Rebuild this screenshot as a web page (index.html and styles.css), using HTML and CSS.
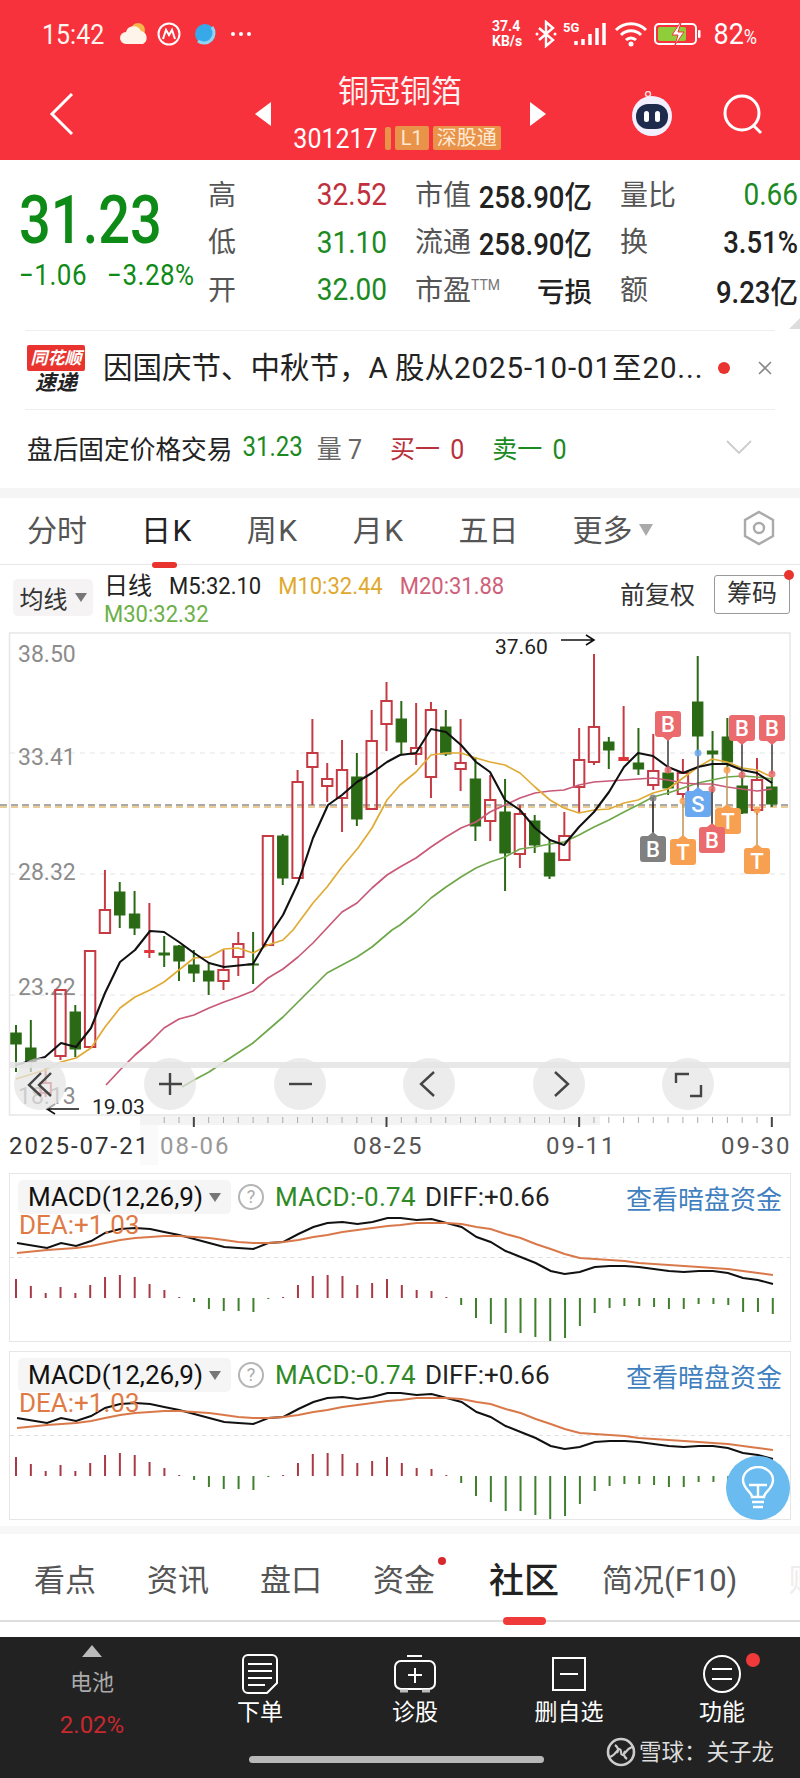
FILE: index.html
```html
<!DOCTYPE html>
<html lang="zh-CN">
<head>
  <meta charset="UTF-8" />
  <meta name="viewport" content="width=device-width, initial-scale=1" />
  <title>铜冠铜箔 301217</title>
  <link rel="stylesheet" href="styles.css">
</head>
<body>

  <!-- Barra roja -->
  <header class="top">
    <div class="status">
      <span class="clock num">15:42</span>
      <svg class="st-apps" width="140" height="30" viewBox="0 0 140 30">
        <circle cx="20" cy="11" r="7" fill="#f6b44a"/>
        <path d="M8 25a6 6 0 0 1 0-12 8 8 0 0 1 15-1 7 7 0 0 1 2 13z" fill="#fff4ea"/>
        <circle cx="51" cy="15" r="10.5" fill="none" stroke="#fff" stroke-width="2"/>
        <path d="M45 20l3-9 3 5 3-5 3 9" fill="none" stroke="#fff" stroke-width="2"/>
        <circle cx="87" cy="15" r="10" fill="#38a9e8"/>
        <path d="M80 22a10 10 0 0 0 14-14" fill="none" stroke="#8fd3f5" stroke-width="3"/>
        <circle cx="115" cy="15" r="2" fill="#fff"/>
        <circle cx="123" cy="15" r="2" fill="#fff"/>
        <circle cx="131" cy="15" r="2" fill="#fff"/>
      </svg>
      <div class="st-right">
        <span class="net">37.4<br>KB/s</span>
        <svg width="22" height="28" viewBox="0 0 22 28">
          <path d="M4 8l14 12-7 6V2l7 6L4 20" fill="none" stroke="#fff" stroke-width="2.4"/>
          <circle cx="2" cy="14" r="1.5" fill="#fff"/>
          <circle cx="20" cy="14" r="1.5" fill="#fff"/>
        </svg>
        <svg class="st-signal" width="44" height="28" viewBox="0 0 44 28">
          <text class="st-5g" x="0" y="12">5G</text>
          <path d="M13 21v4M20 19v6M27 14v11M34 8v17M41 3v22" stroke="#fff" stroke-width="3.5" fill="none"/>
        </svg>
        <svg width="34" height="28" viewBox="0 0 34 28">
          <path d="M2 10a21 21 0 0 1 30 0M7 15a14 14 0 0 1 20 0M12 20a7 7 0 0 1 10 0" fill="none" stroke="#fff" stroke-width="3"/>
          <circle cx="17" cy="24" r="2.5" fill="#fff"/>
        </svg>
        <svg width="48" height="24" viewBox="0 0 48 24">
          <rect x="1" y="2" width="41" height="20" rx="4" fill="none" stroke="#fff" stroke-width="2"/>
          <rect x="4" y="5" width="28" height="14" rx="2" fill="#8fce3a"/>
          <path d="M26 1l-8 12h6l-3 10 9-13h-6l3-9z" fill="#fff" stroke="#f8323c"/>
          <rect x="44" y="8" width="2.5" height="8" rx="1" fill="#fff"/>
        </svg>
        <span class="batt num">82<small>%</small></span>
      </div>
    </div>

    <nav class="navbar">
      <svg class="back" width="28" height="44" viewBox="0 0 28 44">
        <path d="M24 2L4 22l20 20" fill="none" stroke="#fff" stroke-width="3"/>
      </svg>
      <div class="stock">
        <span class="tri-left"></span>
        <div class="stock-name">
          <div class="stock-title">铜冠铜箔</div>
          <div class="stock-sub">
            <span class="code num">301217</span>
            <span class="tag-bar"></span>
            <span class="tag tag-l1">L1</span>
            <span class="tag">深股通</span>
          </div>
        </div>
        <span class="tri-right"></span>
      </div>
      <div class="nav-icons">
        <svg width="48" height="46" viewBox="0 0 48 46">
          <circle cx="20" cy="3" r="2.5" fill="none" stroke="#ffd6da" stroke-width="1.5"/>
          <circle cx="24" cy="25" r="20" fill="#f2f0ff"/>
          <rect x="8" y="13" width="32" height="25" rx="12" fill="#1f2b4d"/>
          <rect x="16" y="20" width="5" height="11" rx="2.5" fill="#fff"/>
          <rect x="27" y="20" width="5" height="11" rx="2.5" fill="#fff"/>
        </svg>
        <svg width="40" height="42" viewBox="0 0 40 42">
          <circle cx="19" cy="20" r="17" fill="none" stroke="#fff" stroke-width="3"/>
          <path d="M30 32l8 8" stroke="#fff" stroke-width="3"/>
        </svg>
      </div>
    </nav>
  </header>

  <!-- Cotización -->
  <section class="quote">
    <div class="price-box">
      <div class="price num">31.23</div>
      <div class="change"><span class="num">−1.06</span><span class="num">−3.28%</span></div>
    </div>
    <div class="stats">
      <span class="s-label">高</span><span class="s-val num red">32.52</span>
      <span class="s-label">市值</span><span class="s-val num dark">258.90亿</span>
      <span class="s-label">量比</span><span class="s-val num green">0.66</span>

      <span class="s-label">低</span><span class="s-val num green">31.10</span>
      <span class="s-label">流通</span><span class="s-val num dark">258.90亿</span>
      <span class="s-label">换</span><span class="s-val num dark">3.51%</span>

      <span class="s-label">开</span><span class="s-val num green">32.00</span>
      <span class="s-label">市盈<sup class="ttm">TTM</sup></span><span class="s-val dark">亏损</span>
      <span class="s-label">额</span><span class="s-val num dark">9.23亿</span>
    </div>
    <span class="corner"></span>
  </section>

  <section class="notice">
    <div class="flash">
      <div class="flash-top">同花顺</div>
      <div class="flash-bottom">速递</div>
    </div>
    <div class="notice-text">因国庆节、中秋节，A 股从<span class="notice-num">2025-10-01至20...</span></div>
    <span class="notice-dot"></span>
    <svg class="notice-close" width="16" height="16" viewBox="0 0 16 16">
      <path d="M2 2l12 12M14 2L2 14" stroke="#888" stroke-width="1.6"/>
    </svg>
  </section>

  <section class="after-hours">
    <span class="ah-title">盘后固定价格交易</span>
    <span class="num green ah-price">31.23</span>
    <span class="ah-gray">量 <span class="num">7</span></span>
    <span class="ah-red">买一 <span class="num">0</span></span>
    <span class="ah-green">卖一 <span class="num">0</span></span>
    <svg class="ah-more" width="26" height="14" viewBox="0 0 26 14">
      <path d="M1 1l12 12L25 1" fill="none" stroke="#ccc" stroke-width="1.8"/>
    </svg>
  </section>

  <div class="gap"></div>

  <nav class="period-tabs">
    <a>分时</a>
    <a class="k-tab active">日K</a>
    <a class="k-tab">周K</a>
    <a class="k-tab">月K</a>
    <a>五日</a>
    <a class="more">更多<span class="more-tri"></span></a>
    <svg class="hex" width="32" height="36" viewBox="0 0 32 36">
      <path d="M16 2l14 8v16l-14 8-14-8V10z" fill="none" stroke="#aaa" stroke-width="2.4"/>
      <circle cx="16" cy="18" r="5" fill="none" stroke="#aaa" stroke-width="2.4"/>
    </svg>
  </nav>

  <div class="ma-row">
    <div class="ma-chip">均线<span class="chip-tri"></span></div>
    <div class="ma-values">
      <div class="ma-line">
        <span class="ma-day">日线</span>
        <span class="num">M5:32.10</span>
        <span class="num c-m10">M10:32.44</span>
        <span class="num c-m20">M20:31.88</span>
      </div>
      <div class="ma-line"><span class="num c-m30">M30:32.32</span></div>
    </div>
    <span class="adjust">前复权</span>
    <div class="chips-btn">筹码<span class="chips-dot"></span></div>
  </div>

  <svg id="kline" class="kline" width="800" height="533" viewBox="0 632 800 533"></svg>

  <div class="macd-list">
    <section class="macd">
      <svg class="macd-plot" viewBox="10 1174 779 167" preserveAspectRatio="none"></svg>
      <div class="macd-head">
        <div class="macd-chip">MACD(12,26,9)<span class="chip-tri"></span></div>
        <span class="help">?</span>
        <span class="macd-green">MACD:-0.74</span>
        <span class="macd-diff">DIFF:+0.66</span>
        <a class="macd-link">查看暗盘资金</a>
      </div>
      <div class="macd-dea">DEA:+1.03</div>
    </section>
    <section class="macd">
      <svg class="macd-plot" viewBox="10 1174 779 167" preserveAspectRatio="none"></svg>
      <div class="macd-head">
        <div class="macd-chip">MACD(12,26,9)<span class="chip-tri"></span></div>
        <span class="help">?</span>
        <span class="macd-green">MACD:-0.74</span>
        <span class="macd-diff">DIFF:+0.66</span>
        <a class="macd-link">查看暗盘资金</a>
      </div>
      <div class="macd-dea">DEA:+1.03</div>
      <div class="fab">
        <svg width="34" height="44" viewBox="0 0 34 44">
          <path d="M11 31c0-5-9-8-9-17a15 13 0 0 1 30 0c0 9-9 12-9 17z" fill="none" stroke="#fff" stroke-width="2.4"/>
          <path d="M8 19h18M17 19v12M11 36h12M12 41h10" fill="none" stroke="#fff" stroke-width="2.4"/>
        </svg>
      </div>
    </section>
  </div>

  <div class="gap gap-low"></div>

  <nav class="info-tabs">
    <a>看点</a>
    <a>资讯</a>
    <a>盘口</a>
    <a class="has-dot">资金</a>
    <a class="active">社区</a>
    <a>简况(F10)</a>
    <a class="faded">财</a>
  </nav>

  <footer class="bar">
    <div class="bar-item bar-first">
      <span class="up-tri"></span>
      <span class="sector">电池</span>
      <span class="sector-pct">2.02%</span>
    </div>
    <div class="bar-item">
      <svg width="36" height="40" viewBox="0 0 36 40">
        <path d="M6 1h24a5 5 0 0 1 5 5v23l-10 10H6a5 5 0 0 1-5-5V6a5 5 0 0 1 5-5z" fill="none" stroke="#fff" stroke-width="2"/>
        <path d="M6 10h24M6 17h24M6 24h24M6 31h17" stroke="#fff" stroke-width="2"/>
      </svg>
      <span>下单</span>
    </div>
    <div class="bar-item">
      <svg width="44" height="40" viewBox="0 0 44 40">
        <path d="M14 2h15" stroke="#fff" stroke-width="2"/>
        <rect x="2" y="7" width="40" height="28" rx="6" fill="none" stroke="#fff" stroke-width="2"/>
        <path d="M22 14v15M15 21h14" stroke="#fff" stroke-width="2"/>
        <path d="M7 37h8M29 37h8" stroke="#bbb" stroke-width="3"/>
      </svg>
      <span>诊股</span>
    </div>
    <div class="bar-item">
      <svg width="36" height="40" viewBox="0 0 36 40">
        <rect x="2" y="4" width="32" height="32" fill="none" stroke="#fff" stroke-width="2"/>
        <path d="M9 20h18" stroke="#fff" stroke-width="2"/>
      </svg>
      <span>删自选</span>
    </div>
    <div class="bar-item">
      <svg width="40" height="40" viewBox="0 0 40 40">
        <circle cx="20" cy="20" r="18" fill="none" stroke="#fff" stroke-width="2"/>
        <path d="M10 15h20M10 25h20" stroke="#fff" stroke-width="2"/>
      </svg>
      <span>功能</span>
      <span class="bar-dot"></span>
    </div>
    <div class="watermark">
      <svg width="30" height="30" viewBox="0 0 30 30">
        <circle cx="15" cy="15" r="13" fill="none" stroke="#ccc" stroke-width="2.6"/>
        <path d="M4 20c3-1 5-3 7-6 2-3 4-2 4 1s2 4 4 1c2-3 4-5 7-6M9 8c3 2 4 5 2 8M21 22c-3-2-4-5-2-8" fill="none" stroke="#ccc" stroke-width="2.2"/>
      </svg>
      <span>雪球：关子龙</span>
    </div>
    <div class="home-bar"></div>
  </footer>

  <script src="chart.js"></script>
</body>
</html>
```

FILE: styles.css
```css
html, body {
  margin: 0;
  padding: 0;
  background-color: #fff;
}
body {
  width: 800px;
  height: 1778px;
  overflow: hidden;
  font-family: Roboto, 'Noto Sans CJK SC', sans-serif;
  color: #333;
}
svg {
  display: block;
  flex: none;
}
.num {
  display: inline-block;
  transform: scaleY(1.12);
}
.red { color: #c0303c; }
.green { color: #1b8a1f; }
.dark { color: #222; }

/* barra roja */
.top {
  height: 160px;
  background-color: #f8323c;
  color: #fff;
}
.status {
  height: 68px;
  display: flex;
  align-items: center;
  padding-left: 42px;
}
.clock {
  font-size: 25px;
  width: 76px;
  color: #fff6f0;
}
.st-right {
  display: flex;
  align-items: center;
  gap: 6.5px;
  margin-left: 234px;
}
.net {
  font-size: 14px;
  line-height: 15px;
  font-weight: 700;
  width: 36px;
}
.st-5g {
  font-size: 13px;
  font-weight: 700;
  fill: #fff;
}
.batt {
  font-size: 27px;
  margin-left: 5px;
}
.batt small {
  font-size: 18px;
}
.navbar {
  height: 92px;
  display: grid;
  grid-template-columns: 1fr auto 1fr;
  align-items: center;
}
.back {
  margin-left: 48px;
}
.stock {
  display: flex;
  align-items: center;
  gap: 20px;
}
.tri-left, .tri-right {
  width: 0;
  height: 0;
  border-top: 12px solid transparent;
  border-bottom: 12px solid transparent;
}
.tri-left { border-right: 16px solid #fff; }
.tri-right { border-left: 16px solid #fff; }
.stock-name {
  display: flex;
  flex-direction: column;
  align-items: center;
  width: 219px;
  margin-top: -3px;
}
.stock-title {
  font-size: 31px;
  line-height: 40px;
  color: #fff2f2;
}
.stock-sub {
  display: flex;
  align-items: center;
  height: 30px;
  margin-top: 11px;
  margin-left: -6px;
}
.code {
  font-size: 25px;
  margin-right: 7px;
}
.tag-bar {
  width: 6px;
  height: 23px;
  border-radius: 2px;
  background-color: #e8924a;
  margin-right: 4px;
}
.tag {
  height: 24px;
  line-height: 24px;
  padding: 0 4px;
  border-radius: 2px;
  background-color: #e8924a;
  color: #ffe9d2;
  font-size: 20px;
  white-space: nowrap;
}
.tag-l1 {
  margin-right: 4px;
  padding: 0 6px;
}
.nav-icons {
  display: flex;
  align-items: center;
  justify-content: flex-end;
  gap: 47px;
  padding-right: 37px;
}

/* cotización */
.quote {
  position: relative;
  height: 159px;
  padding: 11px 0 0 19px;
  display: flex;
}
.price-box {
  width: 189px;
  color: #0e8a16;
}
.price {
  font-size: 56px;
  line-height: 60px;
  font-weight: 500;
  margin-top: 19px;
  transform: scaleY(1.2);
  transform-origin: left center;
}
.change {
  display: flex;
  gap: 20px;
  margin-top: 10px;
  font-size: 26px;
  letter-spacing: 0.5px;
  line-height: 30px;
  white-space: nowrap;
}
.stats {
  display: grid;
  grid-template-columns: 60px 119px 88px 117px 90px 116px;
  grid-auto-rows: 47.5px;
  align-items: center;
}
.stats .s-label:nth-child(6n+3), .stats .s-label:nth-child(6n+5) {
  margin-left: 28px;
}
.s-label {
  font-size: 28px;
  line-height: 38px;
  margin-top: 2px;
  color: #555;
  white-space: nowrap;
}
.s-val {
  justify-self: end;
  font-size: 28px;
  white-space: nowrap;
}
.s-val.dark {
  font-size: 27.5px;
  font-weight: 500;
}
.ttm {
  font-size: 14px;
  color: #777;
  vertical-align: 10px;
  line-height: 0;
}
.corner {
  position: absolute;
  right: 0;
  bottom: 1px;
  width: 0;
  height: 0;
  border-left: 11px solid transparent;
  border-bottom: 11px solid #ddd;
}
.notice {
  margin: 0 25px;
  height: 78px;
  border-top: 1px solid #eee;
  border-bottom: 1px solid #eee;
  display: flex;
  align-items: center;
}
.flash {
  width: 58px;
  margin-left: 2px;
  margin-right: 18px;
  text-align: center;
  font-weight: 700;
  font-style: italic;
}
.flash-top {
  background-color: #e8332e;
  color: #fff;
  font-size: 17px;
  line-height: 26px;
  border-radius: 2px;
  white-space: nowrap;
}
.flash-bottom {
  color: #222;
  font-size: 21px;
  line-height: 24px;
}
.notice-text {
  font-size: 29.5px;
  line-height: 40px;
  margin-top: -5px;
  color: #222;
  white-space: nowrap;
  width: 612px;
}
.notice-num {
  letter-spacing: 0.9px;
}
.notice-dot {
  width: 12px;
  height: 12px;
  border-radius: 50%;
  background-color: #e8332e;
  flex: none;
  margin: -4px 0 0 3px;
}
.notice-close {
  margin: -4px 0 0 27px;
}
.after-hours {
  height: 78px;
  box-sizing: border-box;
  padding: 0 27px 4px;
  display: flex;
  align-items: center;
  font-size: 25px;
  white-space: nowrap;
}
.ah-title { color: #222; font-size: 25.7px; }
.ah-price { margin-left: 10px; font-size: 24px; }
.ah-gray { margin-left: 14px; color: #666; }
.ah-red { margin-left: 28px; color: #b8323c; word-spacing: 4px; }
.ah-green { margin-left: 28px; color: #1b8a1f; word-spacing: 4px; }
.ah-more { margin-left: auto; margin-right: 21px; }
.gap {
  height: 10px;
  background-color: #f5f5f5;
}
.gap-low {
  height: 8px;
  margin-top: 6px;
  background-color: #f7f7f7;
}

/* pestañas */
.period-tabs {
  height: 67px;
  box-sizing: border-box;
  border-bottom: 1px solid #e8e8e8;
  display: flex;
  align-items: center;
  gap: 54px;
  padding: 0 25px 6px 27px;
  font-size: 30px;
  color: #555;
  white-space: nowrap;
}
.period-tabs a {
  position: relative;
}
.period-tabs .k-tab {
  letter-spacing: 1.5px;
}
.period-tabs .active {
  color: #222;
}
.period-tabs .active::after {
  content: "";
  position: absolute;
  left: 11px;
  bottom: -18px;
  width: 25px;
  height: 6px;
  border-radius: 3px;
  background-color: #e8332e;
}
.more-tri {
  display: inline-block;
  margin-left: 7px;
  border-left: 7px solid transparent;
  border-right: 7px solid transparent;
  border-top: 12px solid #aaa;
  vertical-align: 5px;
}
.hex {
  margin-left: auto;
}
.ma-row {
  height: 67px;
  display: flex;
  padding-left: 13px;
  font-size: 22px;
  white-space: nowrap;
}
.ma-chip {
  width: 80px;
  height: 37px;
  margin-top: 14px;
  border-radius: 5px;
  background-color: #f5f3f3;
  display: flex;
  align-items: center;
  justify-content: center;
  gap: 7px;
  font-size: 24px;
  color: #333;
}
.chip-tri {
  width: 0;
  height: 0;
  border-left: 6px solid transparent;
  border-right: 6px solid transparent;
  border-top: 9px solid #777;
}
.ma-values {
  margin: 7px 0 0 11px;
  width: 516px;
}
.ma-line {
  display: flex;
  gap: 17px;
  line-height: 28px;
  color: #222;
}
.ma-day { font-size: 24px; }
.c-m10 { color: #e0a92e; }
.c-m20 { color: #d0607a; }
.c-m30 { color: #6db04a; }
.adjust {
  margin-top: 19px;
  font-size: 25px;
  line-height: 24px;
  height: 30px;
  color: #333;
}
.chips-btn {
  position: relative;
  width: 76px;
  height: 39px;
  box-sizing: border-box;
  margin: 10px 0 0 19px;
  border: 1px solid #999;
  border-radius: 3px;
  text-align: center;
  font-size: 25px;
  line-height: 36px;
}
.chips-dot {
  position: absolute;
  right: -5px;
  top: -6px;
  width: 10px;
  height: 10px;
  border-radius: 50%;
  background-color: #e8332e;
}

/* gráfico */
.kline {
  background-color: #fff;
}
.frame { fill: none; stroke: #e6e6e6; stroke-width: 1.5; }
.grid-line { stroke: #e4e4e4; stroke-width: 1; stroke-dasharray: 5 5; }
.last-dark { stroke: #555; stroke-width: 1; stroke-dasharray: 7 4; }
.last-gold { stroke: #d9992f; stroke-width: 1; stroke-dasharray: 7 4; }
.wick-up { stroke: #c63a44; stroke-width: 2; }
.wick-down { stroke: #2a6a14; stroke-width: 2; }
.body-up { fill: none; stroke: #c63a44; stroke-width: 2; }
.body-flat { fill: #e0353a; }
.body-down { fill: #2a6a14; stroke: #2a6a14; stroke-width: 1; }
.ma { fill: none; stroke-width: 1.7; stroke-linejoin: round; }
.ma5 { stroke: #111; stroke-width: 2.1; }
.ma10 { stroke: #e0ab35; }
.ma20 { stroke: #c85a78; }
.ma30 { stroke: #6fa84a; }
.y-label {
  font-size: 23px;
  fill: #8c8c8c;
}
.note {
  font-size: 21px;
  fill: #222;
}
.note-arrow { fill: none; stroke: #111; stroke-width: 1.6; }
.badge-letter {
  font-size: 22px;
  font-weight: 500;
  fill: #fff;
  text-anchor: middle;
}
.zoom-band { fill: #e6e6e6; opacity: 0.9; }
.zoom-btn { fill: #e4e4e4; opacity: 0.72; }
.zoom-icon { fill: none; stroke: #444; stroke-width: 2.4; }
.tick-strip { fill: #f3f3f3; }
.tick-fade { fill: #fafafa; }
.tick { stroke: #aaa; stroke-width: 1; }
.tick-major { stroke: #444; stroke-width: 2; }
.x-label {
  font-size: 24px;
  letter-spacing: 2px;
  fill: #555;
}
.x-label-first { fill: #333; }
.x-label-faded { fill: #999; }

/* macd */
.macd-list {
  margin: 8px 9px 0;
  display: flex;
  flex-direction: column;
  gap: 9px;
}
.macd {
  position: relative;
  height: 169px;
  box-sizing: border-box;
  border: 1px solid #e6e6e6;
}
.macd-plot {
  position: absolute;
  left: 0;
  top: 0;
  width: 100%;
  height: 100%;
}
.macd-head {
  position: relative;
  display: flex;
  align-items: center;
  margin: 6px 8px 0;
  height: 34px;
  font-size: 26px;
  white-space: nowrap;
}
.macd-chip {
  width: 213px;
  height: 34px;
  box-sizing: border-box;
  padding: 0 10px;
  border-radius: 5px;
  background-color: #f6f5f5;
  display: flex;
  align-items: center;
  justify-content: space-between;
  color: #111;
}
.help {
  width: 22px;
  height: 22px;
  margin-left: 7px;
  border: 2px solid #b5b5b5;
  border-radius: 50%;
  font-size: 18px;
  line-height: 22px;
  text-align: center;
  color: #aaa;
}
.macd-green {
  margin-left: 11px;
  letter-spacing: 0.3px;
  color: #2f8a25;
}
.macd-diff {
  margin-left: 9px;
  color: #222;
}
.macd-link {
  margin-left: auto;
  font-size: 26px;
  color: #3f7fbf;
}
.macd-dea {
  position: absolute;
  left: 9px;
  top: 41px;
  font-size: 26px;
  line-height: 20px;
  color: #e07a45;
}
.macd-zero { stroke: #e0e0e0; stroke-width: 1; stroke-dasharray: 4 4; }
.diff { fill: none; stroke: #111; stroke-width: 2; }
.dea { fill: none; stroke: #d9794a; stroke-width: 2; }
.bar-up { stroke: #a83a45; stroke-width: 2; }
.bar-down { stroke: #3f7f2e; stroke-width: 2; }
.fab {
  position: absolute;
  right: 0;
  top: 104px;
  width: 64px;
  height: 64px;
  border-radius: 50%;
  background-color: #69bbf0;
  display: flex;
  align-items: center;
  justify-content: center;
}

/* pestañas inferiores */
.info-tabs {
  height: 88px;
  box-sizing: border-box;
  border-bottom: 2px solid #ddd;
  display: flex;
  align-items: center;
  padding: 0 0 0 34px;
  gap: 51px;
  font-size: 31px;
  color: #555;
  white-space: nowrap;
}
.info-tabs a {
  position: relative;
}
.info-tabs .has-dot::after {
  content: "";
  position: absolute;
  right: -11px;
  top: 2px;
  width: 8px;
  height: 8px;
  border-radius: 50%;
  background-color: #d8282e;
}
.info-tabs .active {
  font-size: 35px;
  font-weight: 500;
  color: #222;
  margin: 0 -8px 0 3px;
}
.info-tabs .active::after {
  content: "";
  position: absolute;
  left: 14px;
  bottom: -22px;
  width: 43px;
  height: 8px;
  border-radius: 4px;
  background-color: #f03a3a;
}
.info-tabs .faded {
  color: #eee;
}

/* barra oscura */
.bar {
  position: relative;
  margin-top: 15px;
  height: 141px;
  background-color: #222;
  display: grid;
  grid-template-columns: 184px 152px 158px 150px 1fr;
}
.bar-item {
  position: relative;
  display: flex;
  flex-direction: column;
  align-items: center;
  padding-top: 17px;
  font-size: 23px;
  line-height: 30px;
  color: #fff;
  white-space: nowrap;
}
.bar-item svg {
  margin-bottom: 4px;
}
.bar-first {
  padding-top: 8px;
  font-size: 22px;
}
.up-tri {
  width: 0;
  height: 0;
  border-left: 10px solid transparent;
  border-right: 10px solid transparent;
  border-bottom: 12px solid #bbb;
  margin-bottom: 11px;
}
.sector {
  color: #aaa;
}
.sector-pct {
  margin-top: 12px;
  font-size: 24px;
  color: #c8282e;
}
.bar-dot {
  position: absolute;
  left: 102px;
  top: 16px;
  width: 14px;
  height: 14px;
  border-radius: 50%;
  background-color: #f03a3a;
}
.watermark {
  position: absolute;
  left: 606px;
  top: 100px;
  display: flex;
  align-items: center;
  gap: 3px;
  font-size: 22.5px;
  line-height: 30px;
  color: #ddd;
  white-space: nowrap;
}
.home-bar {
  position: absolute;
  left: 249px;
  top: 119px;
  width: 295px;
  height: 7px;
  border-radius: 4px;
  background-color: #b8b8b8;
}
```

FILE: chart.js
```js
const SVG_NS = 'http://www.w3.org/2000/svg';
const step = 14.82;
const xAt = i => 16 + i * step;

function el(parent, tag, attrs, text) {
  const node = document.createElementNS(SVG_NS, tag);
  for (const k in attrs) node.setAttribute(k, attrs[k]);
  if (text !== undefined) node.textContent = text;
  parent.appendChild(node);
  return node;
}

function poly(parent, cls, pts) {
  el(parent, 'polyline', { class: cls, points: pts.map(p => p.join(',')).join(' ') });
}

// [tipo, mecha arriba, cuerpo arriba, cuerpo abajo, mecha abajo] en px de página
const candles = [
  ['d',1025,1033,1044,1072], ['d',1020,1048,1062,1072], ['u',1068,1083,1093,1097], ['u',990,990,1056,1060],
  ['d',1005,1012,1049,1057], ['u',951,951,1047,1047], ['u',870,910,933,933], ['d',882,892,915,928],
  ['d',891,914,928,935], ['f',903,950,953,958], ['d',936,953,955,967], ['d',945,946,961,981],
  ['d',950,965,973,982], ['d',962,971,981,995], ['u',950,970,981,990], ['u',932,944,957,976],
  ['d',932,964,965,984], ['u',836,836,945,945], ['d',834,836,878,885], ['u',770,782,878,878],
  ['u',719,753,767,805], ['u',763,779,786,802], ['u',740,770,798,832], ['d',753,777,819,826],
  ['u',710,741,809,809], ['u',682,701,724,751], ['d',701,719,742,755], ['u',703,748,754,765],
  ['u',702,710,777,798], ['d',710,727,754,756], ['u',719,763,769,791], ['d',757,779,826,841],
  ['u',775,800,821,841], ['d',779,812,853,891], ['u',805,814,854,868], ['d',815,821,845,853],
  ['d',840,853,876,879], ['u',812,836,860,860], ['u',728,760,787,813], ['u',654,727,762,765],
  ['d',737,742,750,769], ['f',706,757,761,761], ['d',728,763,769,775], ['u',734,771,785,790],
  ['d',770,773,788,795], ['u',759,773,794,800], ['d',656,702,736,753], ['d',731,751,754,793],
  ['d',718,737,762,770], ['d',775,786,813,814], ['u',758,780,810,815], ['d',777,787,804,807]
];

const ma5 = [[16,1065],[45,1057],[61,1043],[76,1047],[91,1028],[105,993],[120,962],[135,950],[150,931],[164,932],[179,942],[194,953],[209,963],[224,967],[253,964],[263,947],[273,930],[283,915],[298,883],[313,838],[328,805],[342,795],[357,782],[372,773],[387,762],[400,755],[416,753],[431,729],[446,732],[461,745],[476,762],[490,772],[505,800],[520,810],[535,828],[550,840],[564,845],[579,827],[594,812],[609,792],[624,767],[638,753],[653,756],[668,767],[683,773],[698,767],[712,764],[727,764],[742,770],[757,773],[772,783]];
const ma10 = [[16,1079],[45,1070],[61,1062],[76,1058],[91,1048],[105,1027],[120,1008],[135,997],[150,990],[164,982],[179,970],[194,958],[209,957],[224,949],[238,948],[253,953],[268,945],[283,940],[293,930],[313,903],[327,887],[342,867],[358,848],[372,828],[387,800],[400,785],[416,772],[431,755],[446,753],[461,753],[476,758],[490,762],[505,765],[520,773],[535,787],[550,800],[564,808],[579,813],[594,810],[609,809],[624,803],[638,800],[653,793],[668,789],[683,778],[698,767],[712,759],[727,762],[742,768],[757,770],[772,777]];
const ma20 = [[106,1085],[120,1070],[135,1055],[150,1042],[164,1028],[179,1019],[194,1015],[209,1008],[224,1002],[238,997],[253,991],[268,978],[283,969],[298,957],[313,943],[327,928],[342,912],[357,903],[372,888],[387,875],[400,867],[416,858],[431,847],[446,837],[461,828],[476,822],[490,812],[505,805],[520,798],[535,793],[550,791],[564,790],[579,785],[594,782],[609,781],[624,780],[638,779],[653,778],[668,780],[683,783],[698,784],[712,784],[727,787],[742,789],[757,791],[772,789]];
const ma30 = [[182,1087],[194,1080],[209,1072],[224,1062],[253,1043],[268,1030],[283,1017],[298,1002],[313,987],[327,973],[342,965],[357,957],[372,947],[392,930],[400,925],[416,912],[431,898],[446,887],[461,877],[476,868],[490,862],[505,857],[520,849],[535,847],[550,844],[564,842],[579,835],[594,827],[609,820],[624,812],[638,805],[653,797],[668,793],[683,788],[698,783],[712,780],[727,777],[742,776],[757,777],[772,779]];

// [letra, color, izquierda, arriba, x de la línea, y del punto, color de la línea]
const badges = [
  ['B','#808080',640,836,653,798,'#222'],
  ['T','#f8a052',670,839,683,801,'#c09a60'],
  ['S','#6aa8f0',685,791,698,753,'#555'],
  ['T','#f8a052',715,808,727,770,'#c09a60'],
  ['B','#ea6a6e',699,827,712,789,'#333'],
  ['T','#f8a052',744,848,757,810,'#c09a60'],
  ['B','#ea6a6e',655,711,668,770,'#444'],
  ['B','#ea6a6e',729,715,742,775,'#444'],
  ['B','#ea6a6e',759,715,772,774,'#444']
];

function drawKline() {
  const svg = document.getElementById('kline');

  el(svg, 'rect', { class: 'frame', x: 9.5, y: 633, width: 780.5, height: 482 });
  [753, 874, 995].forEach(y => el(svg, 'line', { class: 'grid-line', x1: 10, x2: 789, y1: y, y2: y }));

  [['38.50',662],['33.41',765],['28.32',880],['23.22',995],['18.13',1104]].forEach(([t, y]) => {
    el(svg, 'text', { class: 'y-label', x: 18, y }, t);
  });

  el(svg, 'line', { class: 'last-dark', x1: 0, x2: 789, y1: 805, y2: 805 });
  el(svg, 'line', { class: 'last-gold', x1: 0, x2: 789, y1: 807, y2: 807 });

  candles.forEach((c, i) => {
    const [type, wickTop, top, bottom, wickBottom] = c;
    const x = xAt(i);
    const up = type !== 'd';
    const wick = up ? 'wick-up' : 'wick-down';
    if (wickTop < top) el(svg, 'line', { class: wick, x1: x, x2: x, y1: wickTop, y2: top });
    if (wickBottom > bottom) el(svg, 'line', { class: wick, x1: x, x2: x, y1: bottom, y2: wickBottom });
    const cls = type === 'u' ? 'body-up' : type === 'f' ? 'body-flat' : 'body-down';
    el(svg, 'rect', { class: cls, x: x - 5.2, y: top, width: 10.4, height: bottom - top });
  });

  poly(svg, 'ma ma30', ma30);
  poly(svg, 'ma ma20', ma20);
  poly(svg, 'ma ma10', ma10);
  poly(svg, 'ma ma5', ma5);

  badges.forEach(([letter, color, left, top, lineX, dotY, lineColor]) => {
    const below = top > dotY;
    const edge = below ? top : top + 26;
    el(svg, 'line', { x1: lineX, x2: lineX, y1: dotY, y2: edge, stroke: lineColor, 'stroke-width': 1.6 });
    el(svg, 'circle', { cx: lineX, cy: dotY, r: 3.5, fill: color, opacity: 0.85 });
    el(svg, 'rect', { x: left, y: top, width: 26, height: 26, rx: 3, fill: color });
    const tip = below ? edge - 4 : edge + 4;
    el(svg, 'path', { d: `M${lineX - 5} ${edge}L${lineX} ${tip}L${lineX + 5} ${edge}z`, fill: color });
    el(svg, 'text', { class: 'badge-letter', x: left + 13, y: top + 21 }, letter);
  });

  // notas de máximo y mínimo
  el(svg, 'text', { class: 'note', x: 495, y: 654 }, '37.60');
  el(svg, 'path', { class: 'note-arrow', d: 'M561 640H594M586 635L594 640L586 645' });
  el(svg, 'text', { class: 'note', x: 92, y: 1114 }, '19.03');
  el(svg, 'path', { class: 'note-arrow', d: 'M79 1109H47M55 1104L47 1109L55 1114' });

  // botones de zoom
  el(svg, 'rect', { class: 'zoom-band', x: 10, y: 1062, width: 780, height: 6 });
  [40, 170, 300, 429, 559, 688].forEach(cx => el(svg, 'circle', { class: 'zoom-btn', cx, cy: 1084, r: 26 }));
  const icons = ['M41 1073L29 1085L41 1096M51 1073L39 1085L51 1096', 'M170 1073V1095M159 1084H182', 'M289 1084H312',
    'M434 1072L421 1084L434 1096', 'M555 1072L568 1084L555 1096', 'M689 1074H676V1083M701 1085V1096H690'];
  icons.forEach(d => el(svg, 'path', { class: 'zoom-icon', d }));

  // eje de fechas
  el(svg, 'rect', { class: 'tick-strip', x: 140, y: 1116, width: 460, height: 9 });
  el(svg, 'rect', { class: 'tick-fade', x: 140, y: 1125, width: 18, height: 40 });
  for (let i = 10; i < candles.length; i++) {
    const major = (i - 12) % 13 === 0;
    el(svg, 'line', { class: major ? 'tick-major' : 'tick', x1: xAt(i), x2: xAt(i), y1: 1117, y2: major ? 1127 : 1123 });
  }
  el(svg, 'text', { class: 'x-label x-label-first', x: 9, y: 1154 }, '2025-07-21');
  el(svg, 'text', { class: 'x-label x-label-faded', x: 160, y: 1154 }, '08-06');
  [['08-25',353],['09-11',546],['09-30',721]].forEach(([t, x]) => {
    el(svg, 'text', { class: 'x-label', x, y: 1154 }, t);
  });
}

const diff = [[17,1243],[47,1248],[61,1243],[76,1246],[91,1241],[105,1233],[120,1229],[135,1228],[150,1229],[164,1232],[179,1235],[194,1239],[209,1243],[224,1247],[238,1248],[253,1249],[268,1243],[283,1242],[298,1234],[313,1227],[327,1223],[342,1222],[357,1224],[372,1222],[387,1218],[400,1218],[416,1220],[431,1219],[446,1223],[461,1227],[476,1237],[490,1242],[505,1251],[520,1257],[535,1263],[550,1271],[564,1274],[579,1272],[594,1267],[609,1266],[624,1266],[638,1267],[653,1269],[668,1271],[683,1272],[698,1271],[712,1271],[727,1273],[742,1278],[757,1280],[772,1284]];
const dea = [[17,1253],[47,1250],[76,1248],[91,1246],[105,1243],[120,1240],[135,1238],[150,1237],[164,1236],[179,1236],[194,1237],[209,1238],[224,1240],[238,1242],[253,1243],[268,1243],[283,1242],[298,1240],[313,1237],[327,1235],[342,1232],[357,1230],[372,1228],[387,1226],[400,1225],[416,1223],[431,1223],[446,1223],[461,1224],[476,1227],[490,1229],[505,1234],[520,1238],[535,1244],[550,1249],[564,1254],[579,1258],[594,1259],[609,1260],[624,1261],[638,1263],[653,1264],[668,1265],[683,1266],[698,1267],[712,1268],[727,1269],[742,1271],[757,1273],[772,1275]];
const macdBars = [19,12,5,11,5,13,21,23,21,14,8,1,-4,-11,-13,-13,-14,-1,1,13,22,23,22,13,15,19,13,8,7,1,-7,-20,-26,-35,-35,-39,-44,-40,-28,-15,-10,-8,-8,-9,-11,-11,-6,-6,-7,-14,-14,-16];

function drawMacd(svg, lineShift) {
  el(svg, 'line', { class: 'macd-zero', x1: 10, x2: 789, y1: 1257.5, y2: 1257.5 });
  macdBars.forEach((h, i) => {
    const x = xAt(i);
    el(svg, 'line', { class: h > 0 ? 'bar-up' : 'bar-down', x1: x, x2: x, y1: 1298, y2: 1298 - h });
  });
  const shift = pts => pts.map(([x, y]) => [x, y + lineShift]);
  poly(svg, 'diff', shift(diff));
  poly(svg, 'dea', shift(dea));
}

drawKline();
const plots = document.querySelectorAll('.macd-plot');
drawMacd(plots[0], 0);
drawMacd(plots[1], -3);
```
